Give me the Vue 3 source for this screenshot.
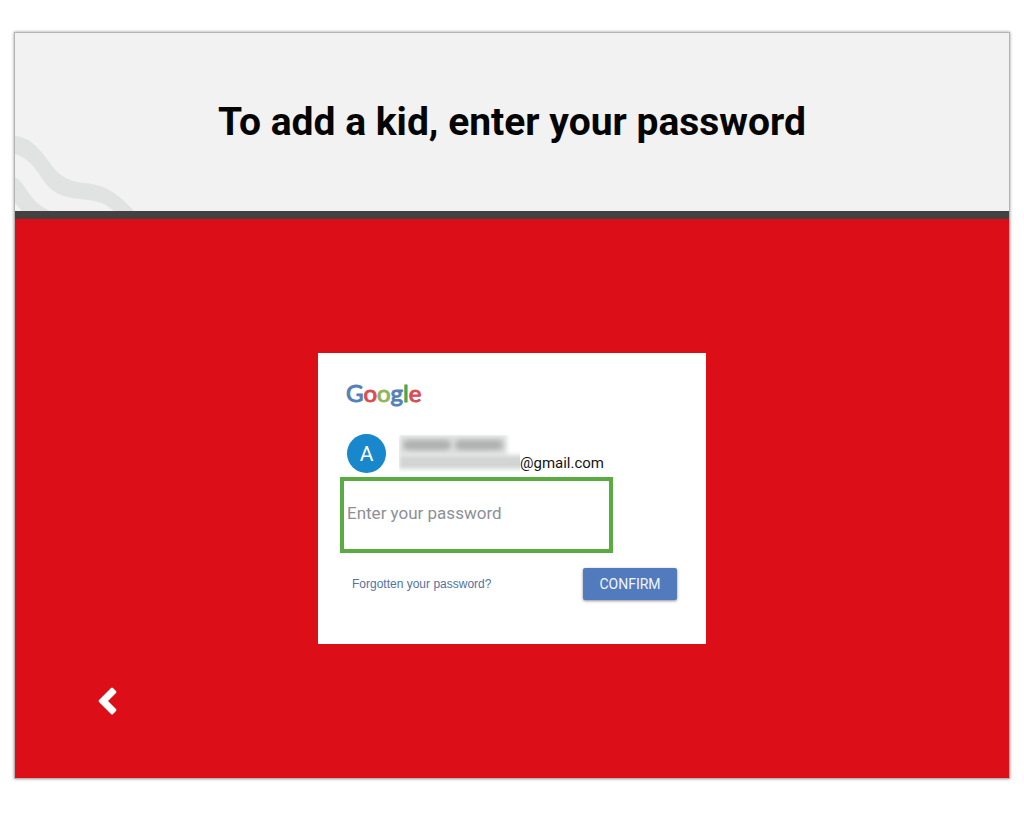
<script setup>
import { ref } from 'vue'

const password = ref('')
const logo = [
  { letter: 'G', tone: 'blue' },
  { letter: 'o', tone: 'red' },
  { letter: 'o', tone: 'lime' },
  { letter: 'g', tone: 'blue' },
  { letter: 'l', tone: 'green' },
  { letter: 'e', tone: 'red' },
]
</script>

<template>
  <div class="page">
    <main class="slide">
      <header class="banner">
        <svg class="waves" viewBox="0 0 120 76" aria-hidden="true">
          <path d="M0 1C14 2 24 13 32 24C42 39 51 46 68 48C88 49 102 57 119 76H99C88 66 76 65 64 64C44 62 34 55 26 42C17 28 10 22 0 19Z" />
          <path d="M0 42C8 46 13 59 20 66C25 71 30 73 35 76H7L0 68Z" />
        </svg>
        <h1>To add a kid, enter your password</h1>
      </header>

      <section class="stage">
        <form class="card" @submit.prevent>
          <div class="logo">
            <span v-for="(item, i) in logo" :key="i" :class="item.tone">{{ item.letter }}</span>
          </div>
          <div class="account">
            <span class="avatar">A</span>
            <div class="redacted" aria-hidden="true">
              <div class="names"><i></i><i></i></div>
              <div class="address"></div>
            </div>
            <span class="email">@gmail.com</span>
          </div>
          <input
            v-model="password"
            class="password"
            type="password"
            placeholder="Enter your password"
            aria-label="Enter your password"
          />
          <div class="actions">
            <a href="#">Forgotten your password?</a>
            <button type="submit" class="confirm">CONFIRM</button>
          </div>
        </form>
        <button type="button" class="back" aria-label="Back">
          <svg viewBox="0 0 20 28" aria-hidden="true">
            <path d="M12 1Q13 0 14 1L17 4Q18 5 17 6L9 14L17 22Q18 23 17 24L14 27Q13 28 12 27L0 15Q-1 14 0 13Z" />
          </svg>
        </button>
      </section>
    </main>
  </div>
</template>

<style>
body {
  background: #fff;
}
</style>

<style scoped>
* {
  box-sizing: border-box;
}
.page {
  min-height: 100vh;
  padding: 32px 14px 40px;
  display: flex;
  font-family: Roboto, "Liberation Sans", sans-serif;
}
.slide {
  flex: 1;
  display: flex;
  flex-direction: column;
  border: 1px solid #b4b4b4;
  box-shadow: 0 0 3px rgba(0, 0, 0, 0.4);
  background: #dc0e18;
}
.banner {
  position: relative;
  height: 186px;
  display: flex;
  align-items: center;
  justify-content: center;
  background: #f2f2f2;
  border-bottom: 8px solid #444241;
}
.waves {
  position: absolute;
  left: 0;
  bottom: 0;
  width: 120px;
  height: 76px;
  fill: #e1e2e2;
}
h1 {
  position: relative;
  margin: 0;
  font-size: 39px;
  line-height: 48px;
  font-weight: 700;
  color: #050505;
}
.stage {
  flex: 1;
  display: flex;
  flex-direction: column;
  align-items: center;
  padding: 134px 84px 0;
}
.card {
  width: 100%;
  max-width: 388px;
  padding: 24px 29px 44px 22px;
  background: #fff;
}
.logo {
  padding-left: 6px;
  font-family: Lato, sans-serif;
  font-size: 24px;
  line-height: 32px;
  font-weight: 400;
  -webkit-text-stroke: 1px currentColor;
}
.blue { color: #5580b8; }
.red { color: #dc4b50; }
.lime { color: #8fb65a; }
.green { color: #46a54c; }
.account {
  display: flex;
  align-items: center;
  padding: 25px 0 4px 7px;
}
.avatar {
  width: 39px;
  height: 39px;
  border-radius: 50%;
  background: #1887cb;
  color: #fff;
  font-size: 21px;
  line-height: 41px;
  text-align: center;
}
.redacted {
  width: 121px;
  height: 37px;
  margin-left: 13px;
  overflow: hidden;
}
.names {
  width: 108px;
  height: 20px;
  padding: 5px 4px;
  display: flex;
  gap: 4px;
  background: #dcdddd;
  filter: blur(2px);
}
.names i {
  flex: 1;
  border-radius: 5px;
  background: #b0b2b2;
  filter: blur(1px);
}
.address {
  height: 14px;
  width: 128px;
  background: #d3d5d5;
  filter: blur(2px);
}
.email {
  align-self: flex-end;
  padding-bottom: 1px;
  font-size: 15px;
  line-height: 18px;
  color: #151515;
}
.password {
  display: block;
  width: 273px;
  max-width: 100%;
  height: 76px;
  padding: 0 3px 4px;
  border: 4px solid #5aac42;
  border-radius: 0;
  outline: none;
  background: #fff;
  font-family: inherit;
  font-size: 17px;
  color: #222;
}
.password::placeholder {
  color: #8b9097;
  opacity: 1;
}
.actions {
  display: flex;
  align-items: center;
  justify-content: space-between;
  padding: 15px 0 0 12px;
}
.actions a {
  font-family: "Liberation Sans", Arial, sans-serif;
  font-size: 12px;
  line-height: 16px;
  color: #5671a0;
  text-decoration: none;
}
.confirm {
  width: 94px;
  height: 32px;
  padding: 0;
  border: 0;
  border-radius: 2px;
  background: #527bbd;
  box-shadow: 0 1px 3px rgba(0, 0, 0, 0.45);
  font-family: inherit;
  font-size: 14px;
  color: #f2f5fa;
}
.back {
  align-self: flex-start;
  margin-top: 43px;
  padding: 0;
  border: 0;
  background: none;
  line-height: 0;
}
.back svg {
  width: 20px;
  height: 28px;
  fill: #fff;
  overflow: visible;
}
</style>
